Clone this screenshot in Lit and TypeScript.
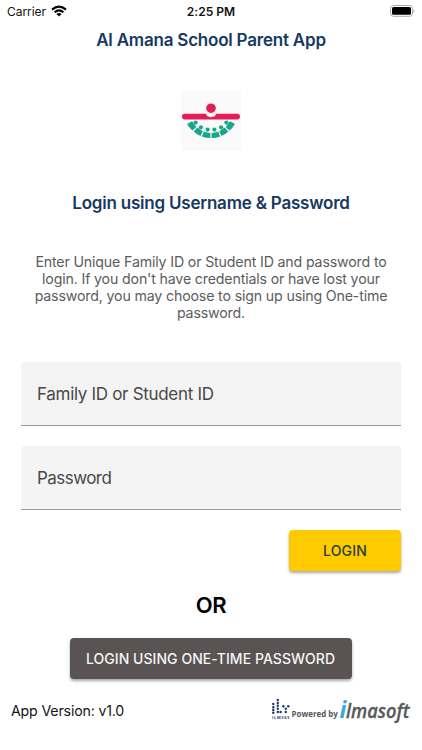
import { LitElement, html, css, svg } from "lit";
import { customElement } from "lit/decorators.js";

@customElement("school-logo")
class SchoolLogo extends LitElement {
  static styles = css`
    :host { display: block; width: 60px; height: 60px; background: #fafafa; }
    svg { display: block; }
  `;
  render() {
    return html`<svg width="60" height="60" viewBox="0 0 60 60">
      <rect x="1" y="22.7" width="58" height="5.8" rx="2.9" fill="#e51c55" />
      <path d="M24.8 22.6A5.3 4.4 0 0 0 35.2 22.6Z" fill="#fafafa" />
      <circle cx="30" cy="17.2" r="4.8" fill="#e51c55" />
      <g fill="#17a78b">
        <path d="M6 33L11 30.2L15.3 36L11.5 39.5Q8.2 36.8 6 33Z" />
        <path d="M12.6 40.6L16.3 36.6L21.8 40.2L19.5 45Q15.6 43.5 12.6 40.6Z" />
        <path d="M20.8 45.5L22.9 40.6Q26 41.9 29.4 41.9V47Q24.8 47 20.8 45.5Z" />
        <path d="M54 33L49 30.2L44.7 36L48.5 39.5Q51.8 36.8 54 33Z" />
        <path d="M47.4 40.6L43.7 36.6L38.2 40.2L40.5 45Q44.4 43.5 47.4 40.6Z" />
        <path d="M39.2 45.5L37.1 40.6Q34 41.9 30.6 41.9V47Q35.2 47 39.2 45.5Z" />
        ${[[14.6, 31.6], [19.9, 36.3], [26.6, 38.6], [33.4, 38.6], [40.1, 36.3], [45.4, 31.6]].map(
          ([x, y]) => svg`<circle cx=${x} cy=${y} r="2.1" />`
        )}
      </g>
    </svg>`;
  }
}

@customElement("status-bar")
class StatusBar extends LitElement {
  static styles = css`
    :host { display: grid; grid-template-columns: 1fr auto 1fr; align-items: center; height: 22px; padding: 0 7px; color: #111; font-size: 12px; }
    .left { display: flex; align-items: center; gap: 5px; letter-spacing: -0.05px; }
    .time { font-weight: 600; letter-spacing: 0.05px; }
    .battery { justify-self: end; }
    svg { display: block; }
  `;
  render() {
    return html`
      <div class="left">
        <span>Carrier</span>
        <svg width="16" height="12" viewBox="0 0 16 12" fill="none" stroke="#000" stroke-width="2.1">
          <path d="M1 4.6Q8-1.4 15 4.6" />
          <path d="M3.6 7.3Q8 3.6 12.4 7.3" />
          <path d="M8 11.6L5.4 9Q8 7 10.6 9Z" fill="#000" stroke="none" />
        </svg>
      </div>
      <span class="time">2:25 PM</span>
      <svg class="battery" width="25" height="12" viewBox="0 0 25 12">
        <rect x="0.5" y="0.5" width="22" height="10.8" rx="3" fill="#fff" stroke="#aaa" />
        <rect x="2" y="2" width="19" height="7.8" rx="1.5" />
        <path d="M23.6 4Q25.2 6 23.6 8Z" fill="#999" />
      </svg>`;
  }
}

@customElement("powered-by")
class PoweredBy extends LitElement {
  static styles = css`
    :host { display: block; }
    svg { display: block; overflow: visible; }
    .tiny { font: 700 4px "Open Sans", sans-serif; fill: #33406f; }
    .by { font: 700 8.5px "Open Sans", sans-serif; fill: #55565a; }
    .brand { font: italic 600 20px "Open Sans", sans-serif; fill: #58595b; stroke: #58595b; stroke-width: 0.3px; }
    .i { font-size: 23px; font-weight: 700; fill: #38a9e4; stroke: none; }
  `;
  render() {
    const dots = [
      [2, 6], [2, 9.3], [2, 12], [2, 14.7],
      [6.5, 2], [6.5, 5], [6.5, 7.8], [6.5, 10.8], [6.5, 14], [9.3, 14],
      [12, 8.3], [17, 8.3], [14.5, 10.8], [14.5, 14],
    ];
    return html`<svg width="140" height="30" viewBox="0 0 140 30">
      <g fill="#25346b">${dots.map(([x, y]) => svg`<circle cx=${x + 0.3} cy=${y} r="1.2" />`)}</g>
      <text class="tiny" x="1" y="20.6" textLength="17.5">ILM365</text>
      <text class="by" x="20.6" y="19.4" textLength="46.2" lengthAdjust="spacingAndGlyphs">Powered by</text>
      <text class="brand i" x="68.5" y="20">i</text>
      <text class="brand" x="75" y="20" textLength="63.5" lengthAdjust="spacingAndGlyphs">lmasoft</text>
    </svg>`;
  }
}

@customElement("app-root")
class AppRoot extends LitElement {
  static styles = css`
    :host { display: flex; flex-direction: column; box-sizing: border-box; height: 750px; overflow: hidden; background: #fff; font-family: Inter, "Liberation Sans", sans-serif; }
    h1, h2, p { margin: 0; text-align: center; }
    h1, h2 { color: #16395f; font-weight: 600; font-size: 17px; line-height: 22px; letter-spacing: -0.21px; }
    h1 { margin-top: 7px; }
    school-logo { margin: 40px auto 0; }
    h2 { margin-top: 41px; }
    .intro { margin-top: 39px; color: #5c5c5c; font-size: 14.2px; line-height: 17px; letter-spacing: -0.16px; }
    .intro span { display: block; }
    .field { box-sizing: border-box; display: flex; align-items: center; height: 64px; margin: 0 21px 20px; padding: 1px 16px 0; background: #f4f4f4; border-bottom: 1px solid #999; border-radius: 4px 4px 0 0; color: #484848; font-size: 17px; letter-spacing: -0.31px; }
    .first { margin-top: 41px; }
    .password { letter-spacing: -0.55px; }
    button { border: 0; padding: 0; height: 41px; border-radius: 4px; font: 500 14px Inter, sans-serif; letter-spacing: 0.05px; box-shadow: 0 2px 3px rgba(0, 0, 0, 0.35); }
    .login { align-self: flex-end; width: 112px; margin-right: 21px; background: #ffcb00; color: #27413d; letter-spacing: 0.2px; }
    .or { margin-top: 21px; font-size: 22px; line-height: 26px; font-weight: 600; letter-spacing: -0.4px; }
    .otp { align-self: center; width: 282px; margin-top: 20px; margin-right: 1px; background: #595453; color: #f5f5f5; }
    footer { display: flex; justify-content: space-between; margin-top: 19px; padding: 0 11px; }
    .version { font-size: 14.2px; line-height: 26px; color: #151515; letter-spacing: -0.18px; }
  `;
  render() {
    return html`
      <status-bar></status-bar>
      <h1>Al Amana School Parent App</h1>
      <school-logo></school-logo>
      <h2>Login using Username &amp; Password</h2>
      <p class="intro">
        <span>Enter Unique Family ID or Student ID and password to</span>
        <span>login. If you don't have credentials or have lost your</span>
        <span>password, you may choose to sign up using One-time</span>
        <span>password.</span>
      </p>
      <div class="field first">Family ID or Student ID</div>
      <div class="field password">Password</div>
      <button class="login">LOGIN</button>
      <p class="or">OR</p>
      <button class="otp">LOGIN USING ONE-TIME PASSWORD</button>
      <footer><span class="version">App Version: v1.0</span><powered-by></powered-by></footer>`;
  }
}
